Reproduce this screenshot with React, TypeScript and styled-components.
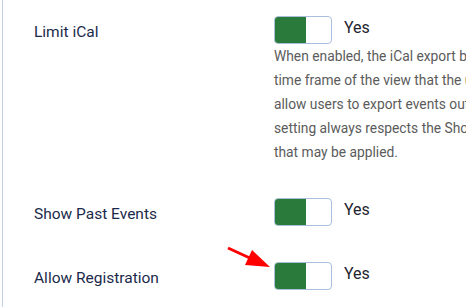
import styled, { createGlobalStyle } from 'styled-components'

const GlobalStyle = createGlobalStyle`
    html, body {
        margin: 0;
        padding: 0;
        background: #ffffff;
    }
    body {
        font-family: Roboto, "Liberation Sans", Arial, sans-serif;
        overflow: hidden;
    }
`

const Panel = styled.div`
    width: 466px;
    height: 307px;

    margin-left: 2px;
    padding: 16px 0 0 31px;
    box-sizing: border-box;

    display: flex;
    flex-direction: column;
    gap: 34px;

    border-left: 1px solid #c3d0e2;

    overflow: hidden;
`

const Field = styled.div<{ $extra?: number }>`
    display: grid;
    grid-template-columns: 240px auto;
    margin-top: ${({ $extra }) => $extra ?? 0}px;
`

const Label = styled.div`
    padding-top: 6px;

    color: #1b2a4b;
    font-size: 15.5px;
    line-height: 20px;
`

const Control = styled.div`
    position: relative;

    display: flex;
    flex-direction: column;
`

const SwitchRow = styled.div`
    display: flex;
    align-items: center;
    gap: 12px;
`

const Switch = styled.span`
    width: 58px;
    height: 28px;

    display: flex;

    box-sizing: border-box;
    border: 1px solid #a9bfdc;
    border-radius: 4px;

    background: #ffffff;
    overflow: hidden;

    &::before {
        width: 31px;
        height: 100%;

        content: '';

        background: #2a7a3c;
    }
`

const State = styled.span`
    color: #1e2430;
    font-size: 16px;
    line-height: 28px;
    margin-top: -4px;
`

const Description = styled.p`
    margin: 0;

    color: #5b5b5b;
    font-size: 13.8px;
    line-height: 24px;
    white-space: pre;
`

const Arrow = styled.svg`
    position: absolute;
    left: -50px;
    top: -18px;
`

const description = `When enabled, the iCal export button only exports events within the
time frame of the view that the user is currently viewing. Disable to
allow users to export events outside of this time frame. Note this
setting always respects the Show Past Events option and other filters
that may be applied.`

function Toggle({ arrow }: { arrow?: boolean }) {
    return (
        <SwitchRow>
            <Switch />
            <State>Yes</State>
            {arrow && (
                <Arrow width="50" height="28" viewBox="0 0 50 28">
                    <line x1="4" y1="4" x2="28" y2="15" stroke="#ff0000" strokeWidth="3" />
                    <polygon points="46,23 28,6 21,21" fill="#ff0000" />
                </Arrow>
            )}
        </SwitchRow>
    )
}

export default function App() {
    return (
        <>
            <GlobalStyle />
            <Panel>
                <Field>
                    <Label>Limit iCal</Label>
                    <Control>
                        <Toggle />
                        <Description>{description}</Description>
                    </Control>
                </Field>
                <Field>
                    <Label>Show Past Events</Label>
                    <Control><Toggle /></Control>
                </Field>
                <Field $extra={2}>
                    <Label>Allow Registration</Label>
                    <Control><Toggle arrow /></Control>
                </Field>
            </Panel>
        </>
    )
}
